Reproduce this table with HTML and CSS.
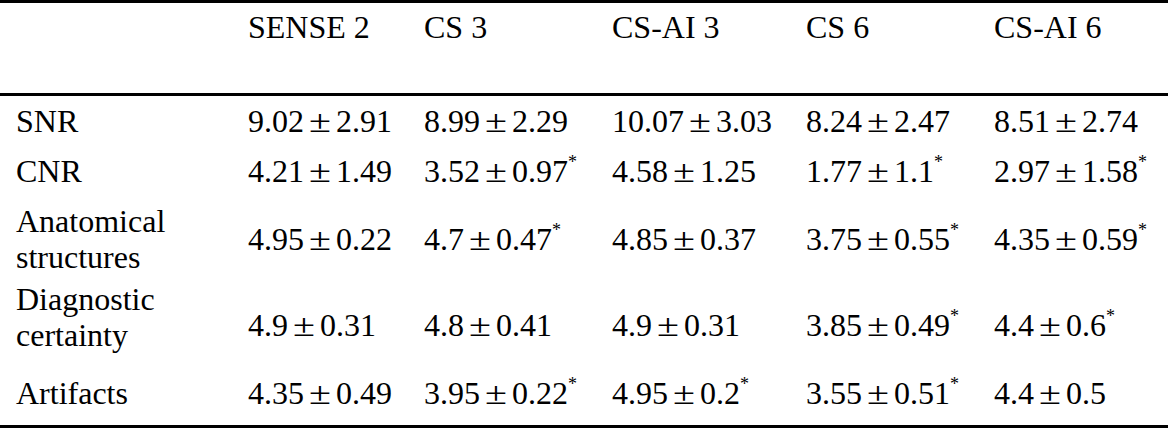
FILE: index.html
```html
<!DOCTYPE html>
<html lang="en">
  <head>
    <meta charset="UTF-8" />
    <meta name="viewport" content="width=device-width, initial-scale=1.0" />
    <title>Image quality scores</title>
    <link rel="stylesheet" href="styles.css">
  </head>
  <body>
    <table class="scores">
      <colgroup>
        <col class="col-label" />
        <col class="col-sense" />
        <col class="col-cs3" />
        <col class="col-csai3" />
        <col class="col-cs6" />
        <col class="col-csai6" />
      </colgroup>
      <thead>
        <tr>
          <th></th>
          <th>SENSE 2</th>
          <th>CS 3</th>
          <th>CS-AI 3</th>
          <th>CS 6</th>
          <th>CS-AI 6</th>
        </tr>
      </thead>
      <tbody>
        <tr>
          <td>SNR</td>
          <td>9.02<span class="pm">±</span>2.91</td>
          <td>8.99<span class="pm">±</span>2.29</td>
          <td>10.07<span class="pm">±</span>3.03</td>
          <td>8.24<span class="pm">±</span>2.47</td>
          <td>8.51<span class="pm">±</span>2.74</td>
        </tr>
        <tr>
          <td>CNR</td>
          <td>4.21<span class="pm">±</span>1.49</td>
          <td>3.52<span class="pm">±</span>0.97<sup>*</sup></td>
          <td>4.58<span class="pm">±</span>1.25</td>
          <td>1.77<span class="pm">±</span>1.1<sup>*</sup></td>
          <td>2.97<span class="pm">±</span>1.58<sup>*</sup></td>
        </tr>
        <tr class="row-anatomy">
          <td>Anatomical<br />structures</td>
          <td>4.95<span class="pm">±</span>0.22</td>
          <td>4.7<span class="pm">±</span>0.47<sup>*</sup></td>
          <td>4.85<span class="pm">±</span>0.37</td>
          <td>3.75<span class="pm">±</span>0.55<sup>*</sup></td>
          <td>4.35<span class="pm">±</span>0.59<sup>*</sup></td>
        </tr>
        <tr class="row-diagnostic">
          <td>Diagnostic<br />certainty</td>
          <td>4.9<span class="pm">±</span>0.31</td>
          <td>4.8<span class="pm">±</span>0.41</td>
          <td>4.9<span class="pm">±</span>0.31</td>
          <td>3.85<span class="pm">±</span>0.49<sup>*</sup></td>
          <td>4.4<span class="pm">±</span>0.6<sup>*</sup></td>
        </tr>
        <tr class="row-last">
          <td>Artifacts</td>
          <td>4.35<span class="pm">±</span>0.49</td>
          <td>3.95<span class="pm">±</span>0.22<sup>*</sup></td>
          <td>4.95<span class="pm">±</span>0.2<sup>*</sup></td>
          <td>3.55<span class="pm">±</span>0.51<sup>*</sup></td>
          <td>4.4<span class="pm">±</span>0.5</td>
        </tr>
      </tbody>
    </table>
  </body>
</html>
```

FILE: styles.css
```css
body {
  margin: 0;
  background-color: #ffffff;
  color: #000000;
  font-family: "Liberation Serif", "Times New Roman", serif;
}
.scores {
  width: 1168px;
  table-layout: fixed;
  border-collapse: collapse;
  border-top: 3px solid #000000;
  border-bottom: 3px solid #000000;
  font-size: 32px;
  line-height: 36px;
}
.col-label {
  width: 232px;
}
.col-sense {
  width: 176px;
}
.col-cs3 {
  width: 188px;
}
.col-csai3 {
  width: 194px;
}
.col-cs6 {
  width: 188px;
}
.col-csai6 {
  width: 190px;
}
th,
td {
  padding: 7px 0 7px 16px;
  text-align: left;
  white-space: nowrap;
}
th {
  font-weight: normal;
  vertical-align: top;
  height: 77px;
  padding-top: 6px;
  border-bottom: 3px solid #000000;
}
td {
  vertical-align: middle;
}
.row-anatomy td {
  padding-bottom: 0;
}
.row-diagnostic td {
  padding-top: 12px;
  padding-bottom: 6px;
}
.row-diagnostic td:first-child {
  padding-top: 6px;
  padding-bottom: 15px;
}
.row-last td {
  padding-bottom: 14px;
}
.pm {
  display: inline-block;
  width: 1em;
  text-align: center;
  transform: scaleX(1.25);
}
sup {
  font-size: 18px;
  line-height: 0;
  vertical-align: 14px;
}
```
